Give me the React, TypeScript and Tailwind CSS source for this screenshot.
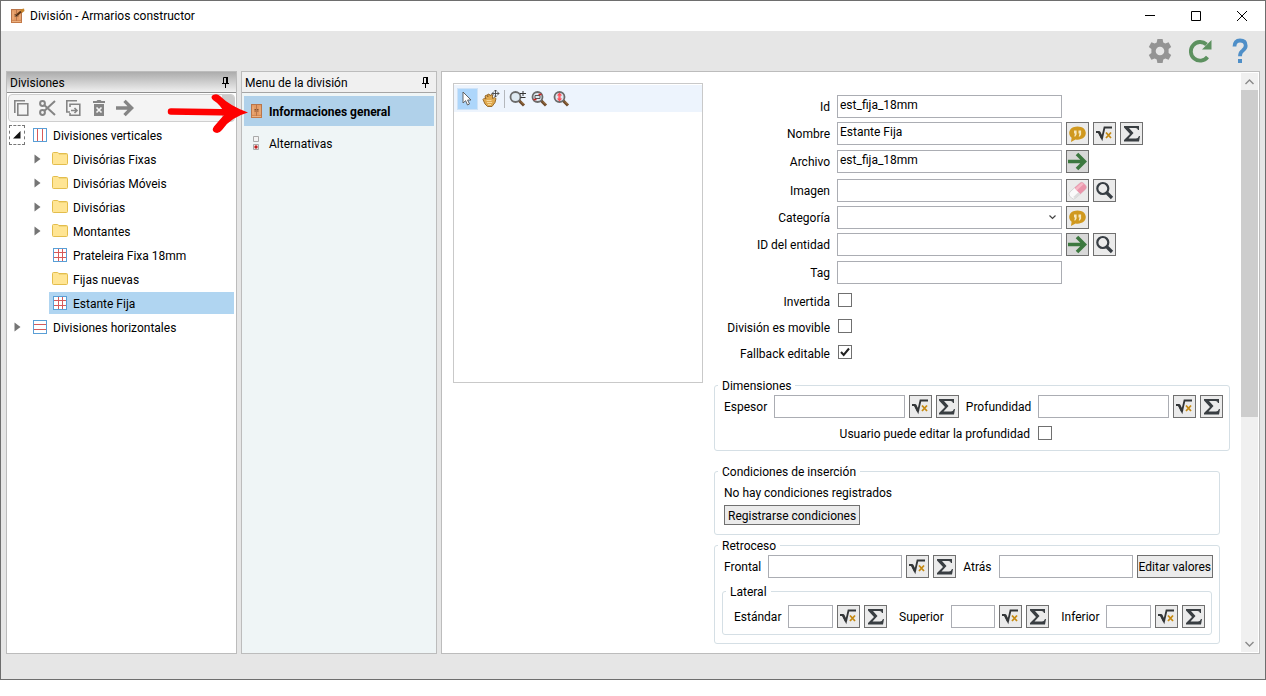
import { ReactNode, useState } from "react";

type TreeIcon = "vertical" | "horizontal" | "grid" | "folder";

type TreeNode = {
  label: string;
  icon: TreeIcon;
  level: 0 | 1;
  state: "open" | "closed" | "leaf";
};

const treeNodes: TreeNode[] = [
  { label: "Divisiones verticales", icon: "vertical", level: 0, state: "open" },
  { label: "Divisórias Fixas", icon: "folder", level: 1, state: "closed" },
  { label: "Divisórias Móveis", icon: "folder", level: 1, state: "closed" },
  { label: "Divisórias", icon: "folder", level: 1, state: "closed" },
  { label: "Montantes", icon: "folder", level: 1, state: "closed" },
  { label: "Prateleira Fixa 18mm", icon: "grid", level: 1, state: "leaf" },
  { label: "Fijas nuevas", icon: "folder", level: 1, state: "leaf" },
  { label: "Estante Fija", icon: "grid", level: 1, state: "leaf" },
  { label: "Divisiones horizontales", icon: "horizontal", level: 0, state: "closed" }
];

const inputClass = "h-[23px] min-w-0 border border-[#abadb3] bg-white px-[2px] pb-[3px] text-[12px] outline-none";

function CabinetIcon({ pencil = false }: { pencil?: boolean }) {
  return (
    <svg width="16" height="16" viewBox="0 0 16 16" className="shrink-0">
      <rect x="2.500" y="1.500" width="10" height="12" fill="#e39a63" stroke="#b9754a" />
      <path d="M7.500 2v11" stroke="#b9754a" />
      <path d="M2 12.500h11V15H2z" fill="#c47a48" />
      <path d="M3 13.500h9" stroke="#eab081" />
      <path d="M5.500 6.500h1.500M8 6.500h1.500M5.500 8h1.500M8 8h1.500" stroke="#7a4a2a" strokeWidth=".9" />
      <path d="M4 3.500v8M11 3.500v8" stroke="#edb184" />
      {pencil ? (
        <>
          <path d="M8 7 12 3.500" stroke="#5a3212" strokeWidth="2.200" />
          <path d="M11 1.500 15 .5 15.500 3 13 5z" fill="#c7842b" />
          <path d="m6.500 8.500.6-2 1.400 1.400z" fill="#222" />
        </>
      ) : null}
    </svg>
  );
}

function NodeIcon({ icon }: { icon: TreeIcon }) {
  if (icon === "folder") {
    return (
      <svg width="18" height="16" viewBox="0 0 18 16" className="shrink-0">
        <path d="M1.500 2.500q0-1 1-1h4q.8 0 1.200 1h7.800q1 0 1 1v9q0 1-1 1h-13q-1 0-1-1z" fill="#ffe594" stroke="#e3bd4c" />
        <path d="M8 3.500h8" stroke="#f3d77a" />
      </svg>
    );
  }
  return (
    <svg width="18" height="16" viewBox="0 0 18 16" className="shrink-0">
      <rect x="2.500" y="1.500" width="13" height="13" fill="#fff" stroke="#5a9fd6" />
      {icon === "vertical" ? <path d="M6.500 2v12M11.500 2v12" stroke="#d65a5a" /> : null}
      {icon === "horizontal" ? <path d="M3 5.500h12M3 10.500h12" stroke="#d65a5a" /> : null}
      {icon === "grid" ? <path d="M7.500 2v12M11.500 2v12M3 5.500h12M3 10.500h12" stroke="#d65a5a" /> : null}
    </svg>
  );
}

function PinIcon() {
  return (
    <svg width="9" height="11" viewBox="0 0 9 11">
      <path d="M2.500 6V.5H6V6M1 6.500h7M4.500 7v4" fill="none" stroke="#000" />
      <path d="M5 0h2v6H5z" />
    </svg>
  );
}

function FormulaIcon() {
  return (
    <svg width="17" height="17" viewBox="0 0 17 17">
      <path d="M0 7h3l3 6.500 2.500-11H16" fill="none" stroke="#333638" strokeWidth="1.800" />
      <path d="m3 7 3 6" stroke="#333638" strokeWidth="2.600" />
      <path d="m10 7.500 5 5.500M15 7.500l-5 5.500" stroke="#c68a12" strokeWidth="1.800" />
    </svg>
  );
}

function SigmaIcon() {
  return (
    <svg width="18" height="17" viewBox="0 0 18 17">
      <path d="M1 1h15v4h-1q-.4-2-2.500-2H6l4.500 5-5 5.500H13q2 0 3-2.500h1l-1 5.500H1v-1.500L7 9 1 2.500z" fill="#393e42" />
    </svg>
  );
}

function QuoteIcon() {
  return (
    <svg width="19" height="18" viewBox="0 0 19 18">
      <path d="M9.500 1.500c5 0 8.300 2.800 8.300 6.600s-3.300 6.600-8.300 6.600q-1 0-2-.2L3 17l.6-4.200C2 11.500 1.200 10 1.200 8.100c0-3.800 3.300-6.600 8.300-6.600z" fill="#d0991f" />
      <path d="M6 5.500h2.600v4L7.400 11.500H6.200l.8-3H6zM10.500 5.500h2.600v4l-1.200 2h-1.200l.8-3h-1z" fill="#f6e7bd" />
    </svg>
  );
}

function GoIcon({ color = "#3c783f", size = 19 }: { color?: string; size?: number }) {
  return (
    <svg width={size} height={size} viewBox="0 0 19 19">
      <path d="M0 9.500h16M9 2l7.500 7.500L9 17" fill="none" stroke={color} strokeWidth="3.600" />
    </svg>
  );
}

function LensIcon() {
  return (
    <svg width="19" height="19" viewBox="0 0 19 19">
      <circle cx="7.800" cy="7.500" r="5.500" fill="none" stroke="#383e44" strokeWidth="2.200" />
      <path d="m11.500 11.500 5.500 5.500" stroke="#383e44" strokeWidth="3.200" />
    </svg>
  );
}

function EraserIcon() {
  return (
    <svg width="19" height="19" viewBox="0 0 19 19">
      <g transform="rotate(-42 9.500 9.500)">
        <rect x="0" y="5.500" width="19" height="8.500" rx="3" fill="#fafafa" stroke="#cfcfcf" strokeWidth=".8" />
        <path d="M9 5.500h7q3 0 3 3V11q0 3-3 3H9z" fill="#ea95ab" />
        <path d="M9 6.500h8q1.500.5 1.500 2.500H9z" fill="#f6b8c6" />
        <path d="M2 11.500h7V14H3.500Q2 13.500 2 11.500z" fill="#dcdcdc" />
      </g>
    </svg>
  );
}

function ZoomToolIcon({ kind }: { kind: "plus" | "window" | "height" }) {
  return (
    <svg width="18" height="18" viewBox="0 0 18 18">
      <path d="m10 10.500 5 5" stroke="#6d4a2a" strokeWidth="3" />
      <path d="m12 11.500 3 3" stroke="#b0834f" />
      <circle cx="6.500" cy="7" r="5" fill="#dfeaf2" stroke="#6b6b6b" strokeWidth="1.800" />
      {kind === "plus" ? <path d="M11 3.500h6M14 1v5M11.500 7.500h5" stroke="#333" /> : null}
      {kind === "window" ? (
        <>
          <path d="M4 5.500h5v3H4z" fill="none" stroke="#555" />
          <path d="M7.500 4.500h3M2.500 9.500h3" stroke="#d42222" strokeWidth="1.500" />
        </>
      ) : null}
      {kind === "height" ? (
        <>
          <path d="M6.500 4v6" stroke="#ff6670" strokeWidth="2.400" />
          <path d="M3.800 5.500 6.500 2.500l2.700 3zM3.800 8.500l2.700 3 2.700-3z" fill="#ff4f58" />
        </>
      ) : null}
    </svg>
  );
}

function HandIcon() {
  return (
    <svg width="18" height="18" viewBox="0 0 18 18">
      <path d="M1 9.500 2.500 8l1.500 1L3 6l1.500-1L6 7l-.5-2.500L7 4l1.500 2L9 4.500l1.500.5v3.500l2-1L14 8.500l-1 4-3 4H5.500L3 14z" fill="#e0aa50" stroke="#8f6020" strokeWidth=".9" />
      <path d="M4.500 10.500h5M5 12.500h5M6 14.500h3" stroke="#f6d79b" />
      <path d="M13.500 0v7M10 3.500h7M12 1.500 13.500 0 15 1.500M12 5.500 13.500 7 15 5.500M11.500 2 10 3.500 11.500 5M15.500 2 17 3.500 15.500 5" fill="none" stroke="#444" strokeWidth=".9" />
    </svg>
  );
}

function IconButton({ label, pressed = false, children }: { label: string; pressed?: boolean; children: ReactNode }) {
  return (
    <button
      type="button"
      aria-label={label}
      className={`flex size-[23px] shrink-0 items-center justify-center border border-[#707070] ${
        pressed ? "bg-[#d8d8d8]" : "bg-[#ebebeb]"
      }`}
    >
      {children}
    </button>
  );
}

function FormulaButtons() {
  return (
    <>
      <IconButton label="Fórmula">
        <FormulaIcon />
      </IconButton>
      <IconButton label="Sumatoria">
        <SigmaIcon />
      </IconButton>
    </>
  );
}

function TextRow({ id, label, value = "", children }: { id: string; label: string; value?: string; children?: ReactNode }) {
  return (
    <div className="flex items-start">
      <label htmlFor={id} className="w-[116px] pt-[4px] text-right">
        {label}
      </label>
      <input id={id} defaultValue={value} className={`${inputClass} ml-[7px] w-[225px]`} />
      <div className="ml-1 flex gap-1">{children}</div>
    </div>
  );
}

function CheckBox({ id, checked = false }: { id: string; checked?: boolean }) {
  const [on, setOn] = useState(checked);
  return (
    <span className="relative flex size-[14px]">
      <input
        id={id}
        type="checkbox"
        checked={on}
        onChange={(event) => setOn(event.target.checked)}
        className="size-[14px] appearance-none border border-[#707070] bg-white"
      />
      {on ? (
        <svg width="14" height="14" viewBox="0 0 14 14" className="pointer-events-none absolute inset-0">
          <path d="m3 7 2.700 3L11 3.500" fill="none" stroke="#212121" strokeWidth="2" />
        </svg>
      ) : null}
    </span>
  );
}

function CheckRow({ id, label, checked }: { id: string; label: string; checked?: boolean }) {
  return (
    <div className="flex items-center">
      <label htmlFor={id} className="w-[116px] pt-[3px] text-right">
        {label}
      </label>
      <span className="ml-2">
        <CheckBox id={id} checked={checked} />
      </span>
    </div>
  );
}

function Group({ title, className, children }: { title: string; className?: string; children: ReactNode }) {
  return (
    <fieldset className={`min-w-0 rounded-[3px] border border-[#d5dfe5] ${className ?? ""}`}>
      <legend className="ml-[3px] h-4 px-1 leading-[18px]">{title}</legend>
      {children}
    </fieldset>
  );
}

function TitleBar() {
  return (
    <header className="flex h-[30px] shrink-0 items-center bg-white pl-2">
      <CabinetIcon pencil />
      <h1 className="ml-[5px] flex-1">División - Armarios constructor</h1>
      <button type="button" aria-label="Minimizar" className="flex h-full w-[46px] items-center justify-center">
        <svg width="10" height="10" viewBox="0 0 10 10">
          <path d="M0 4.500h10" stroke="#000" />
        </svg>
      </button>
      <button type="button" aria-label="Maximizar" className="flex h-full w-[46px] items-center justify-center">
        <svg width="10" height="10" viewBox="0 0 10 10">
          <path d="M.5.5h9v9h-9z" fill="none" stroke="#000" />
        </svg>
      </button>
      <button type="button" aria-label="Cerrar" className="flex h-full w-[46px] items-center justify-center">
        <svg width="10" height="10" viewBox="0 0 10 10">
          <path d="m0 0 10 10M10 0 0 10" stroke="#000" />
        </svg>
      </button>
    </header>
  );
}

function TopActions() {
  return (
    <div className="flex h-10 shrink-0 items-center justify-end gap-4 pr-[13px]">
      <button type="button" aria-label="Configuración">
        <svg width="24" height="24" viewBox="0 0 24 24">
          <path
            fill="#949494"
            fillRule="evenodd"
            d="M9.400 0h5.200l.7 3.400 2 1.100 3.300-1.200 2.600 4.600-2.600 2.200v3.800l2.600 2.200-2.600 4.600-3.300-1.200-2 1.100-.7 3.400H9.400l-.7-3.400-2-1.100-3.300 1.200-2.600-4.600 2.600-2.200v-3.800L.8 7.900l2.600-4.600 3.300 1.200 2-1.100zM12 7.700a4.300 4.300 0 1 0 0 8.600 4.300 4.300 0 0 0 0-8.600z"
          />
        </svg>
      </button>
      <button type="button" aria-label="Actualizar">
        <svg width="24" height="24" viewBox="0 0 24 24">
          <path d="M18.500 5.500A9.300 9.300 0 1 0 19.500 18" fill="none" stroke="#5d9160" strokeWidth="3.800" />
          <path d="M23.500 1v9.500H14z" fill="#5d9160" />
        </svg>
      </button>
      <button type="button" aria-label="Ayuda">
        <svg width="24" height="26" viewBox="0 0 24 26">
          <path d="M6.500 8.500q0-6 5.500-6 5.700 0 5.700 5.200 0 2.500-2.900 4.800-2.800 2-2.800 5.700" fill="none" stroke="#4f8fc8" strokeWidth="3.800" />
          <path d="M10 21h4v4h-4z" fill="#4f8fc8" />
        </svg>
      </button>
    </div>
  );
}

function TreeRow({ node, selected, onSelect }: { node: TreeNode; selected: boolean; onSelect: () => void }) {
  return (
    <li className={`flex h-6 items-center ${node.level === 1 ? "pl-[22px]" : "pl-[2px]"}`}>
      <span
        className={`flex h-[20px] w-[16px] shrink-0 items-center justify-center ${
          node.state === "open" ? "border border-dashed border-[#777]" : ""
        }`}
      >
        {node.state === "open" ? (
          <svg width="8" height="8" viewBox="0 0 8 8">
            <path d="M7.500 0v7.500H0z" fill="#111" />
          </svg>
        ) : null}
        {node.state === "closed" ? (
          <svg width="7" height="10" viewBox="0 0 7 10">
            <path d="m.5.500 6 4.500-6 4.500z" fill="#757575" />
          </svg>
        ) : null}
      </span>
      <button
        type="button"
        onClick={onSelect}
        className={`ml-[4px] mr-[2px] flex h-[22px] flex-1 items-center gap-1 pl-[2px] text-left ${selected ? "bg-[#b0d5f1]" : ""}`}
      >
        <NodeIcon icon={node.icon} />
        <span className="pt-[2px]">{node.label}</span>
      </button>
    </li>
  );
}

function DivisionsPanel() {
  const [selected, setSelected] = useState("Estante Fija");
  return (
    <aside className="flex w-[231px] shrink-0 flex-col border border-[#bcbcbc] bg-white">
      <div className="flex h-[21px] shrink-0 items-center justify-between border-b border-[#8f8f8f] bg-linear-to-b from-[#acacac] to-[#f0f0f0] pr-[6px] pl-[3px]">
        <h2 className="pt-[2px]">Divisiones</h2>
        <button type="button" aria-label="Fijar panel">
          <PinIcon />
        </button>
      </div>
      <div className="mx-px mt-px flex h-7 shrink-0 items-center gap-[8px] overflow-hidden rounded-[4px] border border-[#cfcfcf] bg-[#f4f4f4] pl-[3px] text-[#858585]">
        <button type="button" aria-label="Copiar">
          <svg width="18" height="18" viewBox="0 0 18 18" fill="none" stroke="currentColor" strokeWidth="1.600">
            <path d="M13 1.800H2.800V14M5.800 4.800h10v11.400h-10z" />
          </svg>
        </button>
        <button type="button" aria-label="Cortar">
          <svg width="18" height="18" viewBox="0 0 18 18" fill="none" stroke="currentColor" strokeWidth="2">
            <circle cx="4.500" cy="4.500" r="2.400" />
            <circle cx="4.500" cy="13.500" r="2.400" />
            <path d="M6.200 6 17 16M6.200 12 17 2" />
          </svg>
        </button>
        <button type="button" aria-label="Duplicar">
          <svg width="18" height="18" viewBox="0 0 18 18" fill="none" stroke="currentColor" strokeWidth="1.600">
            <path d="M13 1.800H2.800V13H6M6 8V5.300h9.800v10.900H6V14M7 11.500h5M10.500 9l2.500 2.500-2.500 2.500" />
          </svg>
        </button>
        <button type="button" aria-label="Eliminar">
          <svg width="18" height="18" viewBox="0 0 18 18" fill="currentColor">
            <path d="M3 2h3.500l1-1h3l1 1H15v2H3zM4 5h10v12H4z" />
            <path d="m6.500 8.500 5 5M11.500 8.500l-5 5" stroke="#f4f4f4" strokeWidth="1.700" />
          </svg>
        </button>
        <button type="button" aria-label="Mover">
          <GoIcon color="#858585" size={18} />
        </button>
        <span className="ml-auto h-full w-3 bg-[#cccccc]" />
      </div>
      <ul className="mt-px">
        {treeNodes.map((node) => (
          <TreeRow
            key={node.label}
            node={node}
            selected={selected === node.label}
            onSelect={() => setSelected(node.label)}
          />
        ))}
      </ul>
    </aside>
  );
}

function MenuPanel() {
  return (
    <nav className="flex w-[196px] shrink-0 flex-col border border-[#bcbcbc] bg-[#eff5f6]">
      <div className="flex h-[21px] shrink-0 items-center justify-between border-b border-[#a5a5a5] bg-[#f0f0f0] pr-[6px] pl-[3px]">
        <h2 className="pt-[2px]">Menu de la división</h2>
        <button type="button" aria-label="Fijar menú">
          <PinIcon />
        </button>
      </div>
      <div className="relative mx-[2px] mt-[3px]">
        <button type="button" className="flex h-[30px] w-full items-center gap-[4px] bg-[#b0d1ea] pl-[5px] font-bold">
          <CabinetIcon />
          <span className="pt-[2px]">Informaciones general</span>
        </button>
        {/* callout over both panels */}
        <svg width="82" height="40" viewBox="0 0 82 40" className="pointer-events-none absolute -top-[3px] -left-[77px]">
          <path d="M4 18.500 70 19.500" fill="none" stroke="#fe0000" strokeWidth="6.500" strokeLinecap="round" />
          <path d="M46 2q4-2 7 1 10 10 28 16.500-18 5-26 17.500-3 4-7 2.500t-1-6q6-7 11-12.500Q54 12 46 7q-3-3 0-5z" fill="#fe0000" />
        </svg>
      </div>
      <button type="button" className="mx-[2px] mt-[3px] flex h-[30px] items-center gap-[4px] pl-[5px]">
        <svg width="16" height="16" viewBox="0 0 16 16">
          <path d="M4.500.5h5v5h-5zM4.500 8.500h5v5h-5z" fill="#f3f3f3" stroke="#a9a9a9" />
          <circle cx="7" cy="11" r="1.700" fill="#c11f1f" />
        </svg>
        Alternativas
      </button>
    </nav>
  );
}

function Preview() {
  return (
    <section className="mt-[11px] h-[300px] w-[250px] shrink-0 border border-[#c9c9c9] bg-white pt-px">
      <div className="flex h-[27px] items-center gap-[4px] bg-[#edf4fd] pl-[3px]">
        <button type="button" aria-label="Seleccionar" className="flex h-[22px] w-[21px] items-center justify-center border border-[#cfe3f7] bg-[#add6fb]">
          <svg width="12" height="16" viewBox="0 0 12 16">
            <path d="M1 1v11l2.600-2.300L5.500 14l2-1-1.900-4H9z" fill="#fff" stroke="#555" strokeWidth=".9" />
          </svg>
        </button>
        <button type="button" aria-label="Mover vista">
          <HandIcon />
        </button>
        <span className="h-[18px] w-px bg-[#b4b8bd]" />
        <button type="button" aria-label="Acercar o alejar">
          <ZoomToolIcon kind="plus" />
        </button>
        <button type="button" aria-label="Zoom de ventana">
          <ZoomToolIcon kind="window" />
        </button>
        <button type="button" aria-label="Ajustar altura">
          <ZoomToolIcon kind="height" />
        </button>
      </div>
    </section>
  );
}

function DivisionForm() {
  return (
    <form className="mt-[23px] ml-[11px] min-w-0 flex-1" onSubmit={(event) => event.preventDefault()}>
      <div className="grid grid-rows-[27px_28px_29px_27px_27px_28px_26px_26px_26px_26px]">
        <TextRow id="id" label="Id" value="est_fija_18mm" />
        <TextRow id="nombre" label="Nombre" value="Estante Fija">
          <IconButton label="Traducir nombre">
            <QuoteIcon />
          </IconButton>
          <FormulaButtons />
        </TextRow>
        <TextRow id="archivo" label="Archivo" value="est_fija_18mm">
          <IconButton label="Abrir archivo" pressed>
            <GoIcon />
          </IconButton>
        </TextRow>
        <TextRow id="imagen" label="Imagen">
          <IconButton label="Borrar imagen">
            <EraserIcon />
          </IconButton>
          <IconButton label="Buscar imagen">
            <LensIcon />
          </IconButton>
        </TextRow>
        <div className="flex items-start">
          <label htmlFor="categoria" className="w-[116px] pt-[4px] text-right">
            Categoría
          </label>
          <span className="relative ml-[7px] flex">
            <select id="categoria" className={`${inputClass} w-[225px] appearance-none`}>
              <option value=""></option>
            </select>
            <svg width="7" height="5" viewBox="0 0 7 5" className="pointer-events-none absolute top-[9px] right-[6px]">
              <path d="m.5.500 3 3 3-3" fill="none" stroke="#444" strokeWidth="1.200" />
            </svg>
          </span>
          <div className="ml-1">
            <IconButton label="Traducir categoría">
              <QuoteIcon />
            </IconButton>
          </div>
        </div>
        <TextRow id="entidad" label="ID del entidad">
          <IconButton label="Abrir entidad" pressed>
            <GoIcon />
          </IconButton>
          <IconButton label="Buscar entidad">
            <LensIcon />
          </IconButton>
        </TextRow>
        <TextRow id="tag" label="Tag" />
        <CheckRow id="invertida" label="Invertida" />
        <CheckRow id="movible" label="División es movible" />
        <CheckRow id="fallback" label="Fallback editable" checked />
      </div>

      <Group title="Dimensiones" className="mt-3 pb-[6px]">
        <div className="flex items-center gap-1 pt-0.5 pr-[6px] pl-[9px]">
          <label htmlFor="espesor" className="mr-[3px]">
            Espesor
          </label>
          <input id="espesor" className={`${inputClass} flex-1`} />
          <FormulaButtons />
          <label htmlFor="profundidad" className="mx-[3px]">
            Profundidad
          </label>
          <input id="profundidad" className={`${inputClass} flex-1`} />
          <FormulaButtons />
        </div>
        <div className="mt-1 flex h-[22px] items-center justify-end gap-2 pr-[177px]">
          <label htmlFor="editarProfundidad" className="pt-[2px]">
            Usuario puede editar la profundidad
          </label>
          <CheckBox id="editarProfundidad" />
        </div>
      </Group>

      <Group title="Condiciones de inserción" className="mt-3 mr-[10px] pb-[9px]">
        <div className="pt-1 pl-[9px]">
          <p className="leading-5">No hay condiciones registrados</p>
          <button type="button" className="mt-0.5 block h-5 border border-[#707070] bg-[#ebebeb] px-[3px] pt-[2px]">
            Registrarse condiciones
          </button>
        </div>
      </Group>

      <Group title="Retroceso" className="mt-0.5 mr-[10px] pb-2">
        <div className="flex items-center gap-1 pt-0.5 pr-[6px] pl-[9px]">
          <label htmlFor="frontal" className="mr-[3px]">
            Frontal
          </label>
          <input id="frontal" className={`${inputClass} flex-1`} />
          <FormulaButtons />
          <label htmlFor="atras" className="mx-[3px]">
            Atrás
          </label>
          <input id="atras" className={`${inputClass} flex-1`} />
          <button type="button" className="h-[23px] shrink-0 border border-[#707070] bg-[#ebebeb] px-px">
            Editar valores
          </button>
        </div>
        <Group title="Lateral" className="mx-[7px] mt-[5px] pb-[6px]">
          <div className="flex items-center gap-1 pt-1.5 pr-[6px] pl-[11px]">
            <label htmlFor="estandar" className="mr-[3px]">
              Estándar
            </label>
            <input id="estandar" className={`${inputClass} flex-1`} />
            <FormulaButtons />
            <label htmlFor="superior" className="mr-[3px] ml-2">
              Superior
            </label>
            <input id="superior" className={`${inputClass} flex-1`} />
            <FormulaButtons />
            <label htmlFor="inferior" className="mr-[3px] ml-2">
              Inferior
            </label>
            <input id="inferior" className={`${inputClass} flex-1`} />
            <FormulaButtons />
          </div>
        </Group>
      </Group>
    </form>
  );
}

function ScrollBar() {
  return (
    <div className="my-px mr-px ml-[11px] flex w-[17px] shrink-0 flex-col bg-[#f0f0f0]">
      <button type="button" aria-label="Subir" className="flex h-[17px] items-center justify-center">
        <svg width="9" height="6" viewBox="0 0 9 6">
          <path d="m.5 5 4-4 4 4" fill="none" stroke="#8a8a8a" strokeWidth="1.400" />
        </svg>
      </button>
      <div className="flex-1">
        <div className="h-[60%] bg-[#cdcdcd]" />
      </div>
      <button type="button" aria-label="Bajar" className="flex h-[17px] items-center justify-center">
        <svg width="9" height="6" viewBox="0 0 9 6">
          <path d="m.5 1 4 4 4-4" fill="none" stroke="#8a8a8a" strokeWidth="1.400" />
        </svg>
      </button>
    </div>
  );
}

export default function App() {
  return (
    <div className="flex min-h-screen flex-col bg-white pb-4 font-['Roboto','Open_Sans',sans-serif] text-[12px] leading-4 text-black">
      <div className="flex flex-1 flex-col border border-[#6e6e6e] bg-[#e6e6e6]">
        <TitleBar />
        <TopActions />
        <div className="flex flex-1 gap-1 pr-[5px] pb-[25px] pl-[5px]">
          <DivisionsPanel />
          <MenuPanel />
          <main className="flex min-w-0 flex-1 border border-[#bcbcbc] bg-white pl-[11px]">
            <Preview />
            <DivisionForm />
            <ScrollBar />
          </main>
        </div>
      </div>
    </div>
  );
}
